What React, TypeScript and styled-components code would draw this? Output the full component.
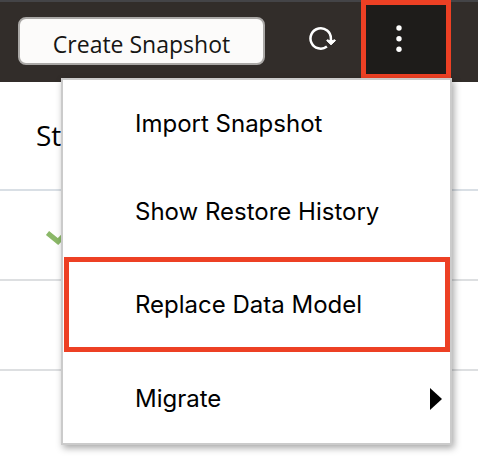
import React from "react";
import styled, { createGlobalStyle } from "styled-components";

const GlobalStyle = createGlobalStyle`
  *, *::before, *::after { box-sizing: border-box; }
  body { margin: 0; background: #fff; color: #000; font-family: "Open Sans", sans-serif; }
  button { font: inherit; color: inherit; cursor: pointer; }
`;

const Page = styled.div`
  position: relative;
  min-height: 100vh;
  overflow: hidden;
`;

const Toolbar = styled.header`
  display: flex;
  align-items: flex-start;
  height: 82px;
  padding: 0 27px 0 18px;
  border-top: 2px solid #444447;
  background: #322d2a;
`;

const CreateButton = styled.button`
  flex: 0 1 247px;
  height: 48px;
  margin-top: 15px;
  padding: 6px 0 0;
  border: 2px solid #aaa8a6;
  border-radius: 8px;
  background: #fcfbfa;
  color: #161513;
  font-size: 23px;
  line-height: 32px;
  white-space: nowrap;
`;

const IconButton = styled.button`
  display: flex;
  margin: 22px auto 0 43px;
  padding: 0;
  border: 0;
  background: none;
  color: #fff;
`;

const MoreButton = styled.button`
  display: flex;
  align-items: center;
  justify-content: center;
  width: 90px;
  height: 79px;
  margin-top: -2px;
  padding: 0 14px 2px 0;
  border: 5px solid #ed4024;
  background: #1e1c1a;
  color: #fff;
`;

const StatusTable = styled.table`
  width: 100%;
  border-collapse: separate;
  border-spacing: 0;
`;

const HeadCell = styled.th`
  height: 109px;
  padding: 0 36px 2px;
  border-bottom: 2px solid #d9dfe5;
  font-size: 28px;
  font-weight: 400;
  line-height: 40px;
  text-align: left;
`;

const Cell = styled.td`
  height: 90px;
  padding: 0 45px;
  border-bottom: 2px solid #dddfe1;

  svg { display: block; }
`;

const Menu = styled.ul`
  position: absolute;
  top: 78px;
  left: 61px;
  right: 26px;
  margin: 0;
  padding: 0;
  list-style: none;
  border: 2px solid #cbcbcb;
  background: #fff;
  box-shadow: 2px 3px 7px rgba(0, 0, 0, 0.35);
  font-family: Inter, sans-serif;
`;

const MenuItem = styled.button<{ $highlighted?: boolean }>`
  display: flex;
  align-items: center;
  justify-content: space-between;
  width: ${(p) => (p.$highlighted ? "calc(100% - 1px)" : "100%")};
  height: ${(p) => (p.$highlighted ? "95px" : "88px")};
  margin: ${(p) => (p.$highlighted ? "1px 0 3px 1px" : "0")};
  padding: ${(p) => (p.$highlighted ? "1px 5px 0 66px" : "0 8px 0 72px")};
  border: ${(p) => (p.$highlighted ? "5px solid #ed4024" : "0")};
  background: none;
  font-size: 24px;
  line-height: 32px;
  text-align: left;
  white-space: nowrap;
`;

const RefreshIcon = () => (
  <svg width="30" height="30" viewBox="0 0 30 30" fill="none" aria-hidden="true">
    <path d="M18.9 22.5A10.2 10.2 0 1 1 22.9 14.5V17" stroke="currentColor" strokeWidth="2.5" />
    <path d="M19.3 15.8L23 17L26.9 15.8L27.5 16.6L23 20.8L18.7 16.6Z" fill="currentColor" stroke="currentColor" strokeLinejoin="round" />
  </svg>
);

const MoreIcon = () => (
  <svg width="8" height="28" viewBox="0 0 8 28" fill="currentColor" aria-hidden="true">
    <circle cx="4" cy="3" r="2.7" />
    <circle cx="4" cy="13.7" r="2.7" />
    <circle cx="4" cy="24.3" r="2.7" />
  </svg>
);

const CheckIcon = () => (
  <svg width="34" height="30" viewBox="0 0 34 30" fill="none" role="img" aria-label="Succeeded">
    <path d="M2.5 13L13 21.5L30 4" stroke="#8bb868" strokeWidth="5" />
  </svg>
);

const SubmenuArrow = () => (
  <svg width="14" height="22" viewBox="0 0 14 22" aria-hidden="true">
    <path d="M2 0L14 11L2 22Z" fill="#000" />
  </svg>
);

const items = [
  { label: "Import Snapshot" },
  { label: "Show Restore History" },
  { label: "Replace Data Model", highlighted: true },
  { label: "Migrate", submenu: true },
];

export default function App() {
  return (
    <>
      <GlobalStyle />
      <Page>
        <Toolbar>
          <CreateButton type="button">Create Snapshot</CreateButton>
          <IconButton type="button" aria-label="Refresh"><RefreshIcon /></IconButton>
          <MoreButton type="button" aria-label="More actions" aria-haspopup="menu" aria-expanded="true">
            <MoreIcon />
          </MoreButton>
        </Toolbar>
        <StatusTable>
          <thead><tr><HeadCell scope="col">Status</HeadCell></tr></thead>
          <tbody>
            <tr><Cell><CheckIcon /></Cell></tr>
            <tr><Cell /></tr>
          </tbody>
        </StatusTable>
        <Menu role="menu">
          {items.map((item) => (
            <li key={item.label} role="none">
              <MenuItem
                type="button"
                role="menuitem"
                $highlighted={item.highlighted}
                aria-haspopup={item.submenu ? "menu" : undefined}
              >
                {item.label}
                {item.submenu && <SubmenuArrow />}
              </MenuItem>
            </li>
          ))}
        </Menu>
      </Page>
    </>
  );
}
